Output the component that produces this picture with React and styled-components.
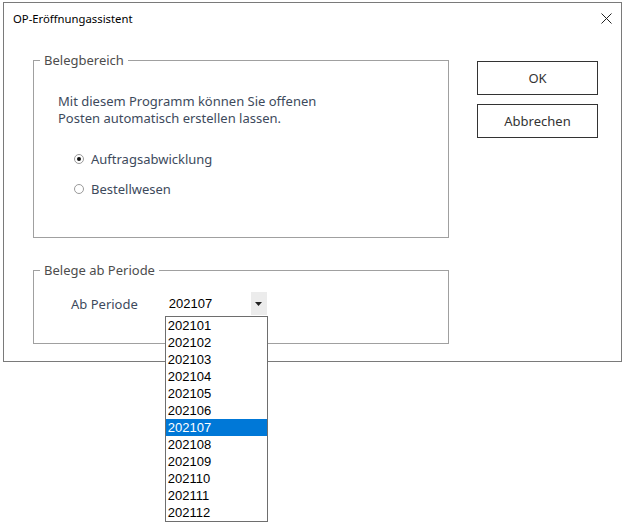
import React, { useState } from 'react'
import styled, { createGlobalStyle } from 'styled-components'

const periods = ['202101', '202102', '202103', '202104', '202105', '202106',
    '202107', '202108', '202109', '202110', '202111', '202112']

const GlobalStyle = createGlobalStyle`
    body {
        margin: 0;
        background: #fff;
        font-family: "Noto Sans", "Liberation Sans", sans-serif;
    }
`

export default function App() {
    const [mode, setMode] = useState('auftrag')
    const [period, setPeriod] = useState('202107')

    return (
        <Page>
            <GlobalStyle />
            <Window>
                <TitleBar>
                    <Title>OP-Eröffnungassistent</Title>
                    <CloseButton aria-label="Schließen">
                        <svg width="11" height="11" viewBox="0 0 11 11">
                            <path d="M0.5 0.5 L10.5 10.5 M10.5 0.5 L0.5 10.5" stroke="#222" strokeWidth="1" fill="none" />
                        </svg>
                    </CloseButton>
                </TitleBar>
                <Body>
                    <Groups>
                        <Group height={178}>
                            <Legend>Belegbereich</Legend>
                            <Info>
                                Mit diesem Programm können Sie offenen<br />
                                Posten automatisch erstellen lassen.
                            </Info>
                            <RadioList>
                                <RadioRow onClick={() => setMode('auftrag')}>
                                    <RadioDot checked={mode === 'auftrag'} />
                                    <Label>Auftragsabwicklung</Label>
                                </RadioRow>
                                <RadioRow onClick={() => setMode('bestell')}>
                                    <RadioDot checked={mode === 'bestell'} />
                                    <Label>Bestellwesen</Label>
                                </RadioRow>
                            </RadioList>
                        </Group>
                        <Group height={74}>
                            <Legend>Belege ab Periode</Legend>
                            <PeriodRow>
                                <Label>Ab Periode</Label>
                                <Combo>
                                    <ComboValue>{period}</ComboValue>
                                    <ComboArrow>
                                        <svg width="7" height="4" viewBox="0 0 7 4">
                                            <path d="M0 0 H7 L3.5 4 Z" fill="#222" />
                                        </svg>
                                    </ComboArrow>
                                    <DropList>
                                        {periods.map(p => (
                                            <DropItem key={p} selected={p === period} onClick={() => setPeriod(p)}>
                                                {p}
                                            </DropItem>
                                        ))}
                                    </DropList>
                                </Combo>
                            </PeriodRow>
                        </Group>
                    </Groups>
                    <Buttons>
                        <Button>OK</Button>
                        <Button>Abbrechen</Button>
                    </Buttons>
                </Body>
            </Window>
        </Page>
    )
}

const Page = styled.div`
    min-height: 527px;
    padding: 2px 0 0 3px;
`

const Window = styled.div`
    width: 619px;
    height: 360px;
    box-sizing: border-box;
    border: 1px solid #7a7a7a;
    background: #fff;
    display: flex;
    flex-direction: column;
`

const TitleBar = styled.div`
    height: 29px;
    display: flex;
    align-items: center;
    justify-content: space-between;
    padding: 0 9px 0 9px;
`

const Title = styled.div`
    font-size: 11.3px;
    color: #000;
    padding-top: 2px;
`

const CloseButton = styled.div`
    width: 11px;
    height: 11px;
    display: flex;
    margin-top: 2px;
`

const Body = styled.div`
    display: flex;
    padding: 28px 0 0 29px;
    gap: 28px;
`

const Groups = styled.div`
    display: flex;
    flex-direction: column;
    gap: 32px;
`

const Group = styled.div`
    position: relative;
    width: 416px;
    height: ${p => p.height}px;
    box-sizing: border-box;
    border: 1px solid #a0a0a0;
`

const Legend = styled.div`
    position: absolute;
    top: -10px;
    left: 6px;
    padding: 0 4px;
    background: #fff;
    font-size: 13px;
    color: #4d4d4d;
    line-height: 18px;
`

const Info = styled.div`
    padding: 32px 0 0 24px;
    font-size: 13px;
    line-height: 17px;
    color: #3d4a5c;
`

const RadioList = styled.div`
    display: flex;
    flex-direction: column;
    gap: 11px;
    padding: 22px 0 0 40px;
`

const RadioRow = styled.div`
    display: flex;
    align-items: center;
    gap: 7px;
    height: 19px;
    cursor: default;
`

const RadioDot = styled.span`
    width: 8px;
    height: 8px;
    border-radius: 50%;
    border: 1px solid #9a9a9a;
    background: #fff;
    display: flex;
    align-items: center;
    justify-content: center;
    &::after {
        content: '';
        width: 4px;
        height: 4px;
        border-radius: 50%;
        background: ${p => (p.checked ? '#111' : 'transparent')};
    }
`

const Label = styled.span`
    font-size: 13px;
    color: #3d4a5c;
`

const PeriodRow = styled.div`
    display: flex;
    align-items: center;
    padding: 21px 0 0 37px;
    gap: 27px;
`

const Combo = styled.div`
    position: relative;
    width: 102px;
    height: 23px;
    display: flex;
    align-items: center;
`

const ComboValue = styled.div`
    flex: 1;
    padding-left: 4px;
    font-family: "Liberation Sans", Arial, sans-serif;
    font-size: 13px;
    color: #000;
`

const ComboArrow = styled.div`
    width: 16px;
    height: 23px;
    background: #ececec;
    display: flex;
    align-items: center;
    justify-content: center;
`

const DropList = styled.div`
    position: absolute;
    top: 24px;
    left: 0;
    width: 103px;
    box-sizing: border-box;
    border: 1px solid #6e6e6e;
    background: #fff;
    z-index: 2;
`

const DropItem = styled.div`
    height: 17px;
    line-height: 17px;
    padding-left: 2px;
    font-family: "Liberation Sans", Arial, sans-serif;
    font-size: 13px;
    color: ${p => (p.selected ? '#fff' : '#000')};
    background: ${p => (p.selected ? '#0078d7' : '#fff')};
`

const Buttons = styled.div`
    display: flex;
    flex-direction: column;
    gap: 9px;
    padding-top: 1px;
`

const Button = styled.div`
    width: 121px;
    height: 34px;
    box-sizing: border-box;
    border: 1px solid #333;
    display: flex;
    align-items: center;
    justify-content: center;
    font-size: 13px;
    color: #333;
`
